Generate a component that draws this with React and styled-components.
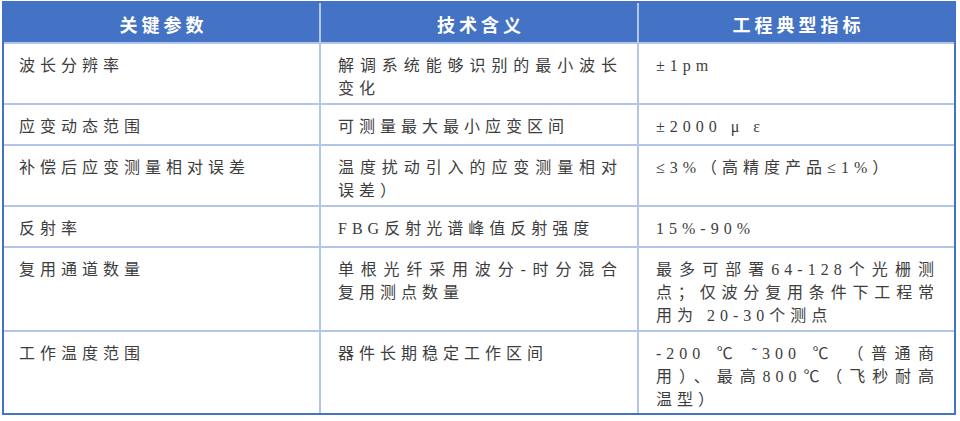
import styled, { createGlobalStyle } from "styled-components";

const GlobalStyle = createGlobalStyle`
  html, body {
    margin: 0;
    padding: 0;
    background: #ffffff;
  }
`;

const Page = styled.div`
  padding: 1px 0 0 2px;
`;

const Table = styled.div`
  display: grid;
  width: 950px;
  grid-template-columns: 315px 316px 315px;
  grid-template-rows: 39px 59px 39px 59px 39px 82px 81px;
  gap: 2px;
  background: #b4c6e7;
  border: 2px solid #4472c4;
`;

const HeadCell = styled.div`
  display: flex;
  align-items: center;
  justify-content: center;
  padding: 3px 0 0 4px;
  background: #4472c4;
  color: #ffffff;
  font-family: "Noto Sans CJK SC", sans-serif;
  font-weight: 700;
  font-size: 18px;
  letter-spacing: 4px;
`;

const Cell = styled.div`
  background: #ffffff;
  padding: 10px ${(p) => (p.$col === 0 ? "16px" : "15px")} 0
    ${(p) => (p.$col === 0 ? "15px" : "17px")};
  color: #3d3d3d;
  font-family: "Liberation Serif", "Noto Sans CJK SC", serif;
  font-size: 16px;
  line-height: 23px;
  letter-spacing: 5px;
`;

const Line = styled.div`
  text-align: ${(p) => (p.$full ? "justify" : "left")};
  text-align-last: ${(p) => (p.$full ? "justify" : "left")};
`;

const headers = ["关键参数", "技术含义", "工程典型指标"];

// each cell is a list of lines; `true` marks a line that fills the cell width
const rows = [
  [
    [["波长分辨率"]],
    [["解调系统能够识别的最小波长", true], ["变化"]],
    [["±1pm"]],
  ],
  [
    [["应变动态范围"]],
    [["可测量最大最小应变区间"]],
    [["±2000 μ ε"]],
  ],
  [
    [["补偿后应变测量相对误差"]],
    [["温度扰动引入的应变测量相对", true], ["误差）"]],
    [["≤3%（高精度产品≤1%）"]],
  ],
  [
    [["反射率"]],
    [["FBG反射光谱峰值反射强度"]],
    [["15%-90%"]],
  ],
  [
    [["复用通道数量"]],
    [["单根光纤采用波分-时分混合", true], ["复用测点数量"]],
    [
      ["最多可部署64-128个光栅测", true],
      ["点；仅波分复用条件下工程常", true],
      ["用为 20-30个测点"],
    ],
  ],
  [
    [["工作温度范围"]],
    [["器件长期稳定工作区间"]],
    [
      ["-200 ℃ ˜300 ℃ （普通商", true],
      ["用）、最高800℃（飞秒耐高", true],
      ["温型）"],
    ],
  ],
];

export default function App() {
  return (
    <>
      <GlobalStyle />
      <Page>
        <Table>
          {headers.map((h) => (
            <HeadCell key={h}>{h}</HeadCell>
          ))}
          {rows.map((row, r) =>
            row.map((lines, c) => (
              <Cell key={`${r}-${c}`} $col={c}>
                {lines.map(([text, full], i) => (
                  <Line key={i} $full={full}>
                    {text}
                  </Line>
                ))}
              </Cell>
            ))
          )}
        </Table>
      </Page>
    </>
  );
}
